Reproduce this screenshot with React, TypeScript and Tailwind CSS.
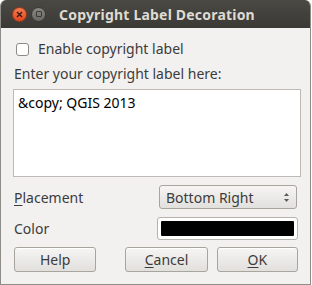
import React from "react";

const font = { fontFamily: '"Noto Sans", "Open Sans", sans-serif' };

function Btn({ children, className = "" }: { children: React.ReactNode; className?: string }) {
  return (
    <div
      className={
        "h-[25px] flex items-center justify-center rounded-[3px] border border-[#a8a49e] bg-gradient-to-b from-[#f6f5f4] to-[#e2e0dd] text-[14px] text-[#3c3c3c] shadow-[inset_0_1px_0_#ffffff] " +
        className
      }
    >
      {children}
    </div>
  );
}

export default function App() {
  return (
    <div className="w-[312px] h-[285px] bg-white overflow-hidden" style={font}>
      <div className="w-[311px] h-[285px] rounded-t-[6px] overflow-hidden flex flex-col bg-[#f2f1f0] border-l border-r border-b border-[#8f8d89]">
        {/* title bar */}
        <div className="h-[28px] shrink-0 bg-gradient-to-b from-[#4a4944] to-[#3a3935] flex items-center pl-[11px]">
          <div className="w-[15px] h-[15px] rounded-full bg-gradient-to-b from-[#f47a50] to-[#e1461c] flex items-center justify-center border border-[#9a3a1a]">
            <svg width="7" height="7" viewBox="0 0 7 7">
              <path d="M1 1 L6 6 M6 1 L1 6" stroke="#3a1a10" strokeWidth="1.4" />
            </svg>
          </div>
          <div className="ml-[4px] w-[15px] h-[15px] rounded-full bg-gradient-to-b from-[#8a8883] to-[#6a6863] flex items-center justify-center border border-[#3a3935]">
            <div className="w-[6px] h-[6px] border border-[#3a3935] rounded-[1px]" />
          </div>
          <div className="ml-[13px] text-[14px] font-bold text-[#dfdbd2] tracking-[0.2px]">Copyright Label Decoration</div>
        </div>
        {/* body */}
        <div className="flex flex-col px-[12px] text-[14px] text-[#3c3c3c]">
          <div className="flex items-center mt-[14px] h-[14px] pl-[3px]">
            <div className="w-[13px] h-[13px] rounded-[3px] border border-[#8c8a86] bg-white" />
            <span className="ml-[9px] leading-none">Enable copyright label</span>
          </div>
          <div className="mt-[9px] pl-[1px] leading-[18px] h-[18px]">Enter your copyright label here:</div>
          <div className="mt-[6px] h-[88px] w-[288px] bg-white border border-[#bdbab6] px-[4px] pt-[4px] text-black leading-[18px]">
            &amp;copy; QGIS 2013
          </div>
          <div className="mt-[8px] flex items-center h-[24px]">
            <span className="pl-[1px]"><span className="underline underline-offset-2">P</span>lacement</span>
            <div className="ml-auto mr-[1px] w-[138px] h-[24px] rounded-[3px] border border-[#a8a49e] bg-gradient-to-b from-[#f6f5f4] to-[#e2e0dd] flex items-center pl-[6px] pr-[6px] text-[#3c3c3c]">
              <span>Bottom Right</span>
              <svg className="ml-auto" width="7" height="11" viewBox="0 0 7 11">
                <path d="M3.5 1 L6 4 L1 4 Z" fill="#5a5a5a" />
                <path d="M3.5 10 L6 7 L1 7 Z" fill="#5a5a5a" />
              </svg>
            </div>
          </div>
          <div className="mt-[8px] flex items-center h-[23px]">
            <span className="pl-[1px]">Color</span>
            <div className="ml-auto w-[141px] h-[23px] rounded-[3px] border border-[#b6b3ae] bg-white p-[3px]">
              <div className="w-full h-full bg-black rounded-[1px]" />
            </div>
          </div>
          <div className="mt-[7px] flex items-center">
            <Btn className="ml-[1px] w-[83px]">Help</Btn>
            <Btn className="ml-[29px] w-[83px]">
              <span><span className="underline underline-offset-2">C</span>ancel</span>
            </Btn>
            <Btn className="ml-[9px] w-[82px]">
              <span><span className="underline underline-offset-2">O</span>K</span>
            </Btn>
          </div>
        </div>
      </div>
    </div>
  );
}
